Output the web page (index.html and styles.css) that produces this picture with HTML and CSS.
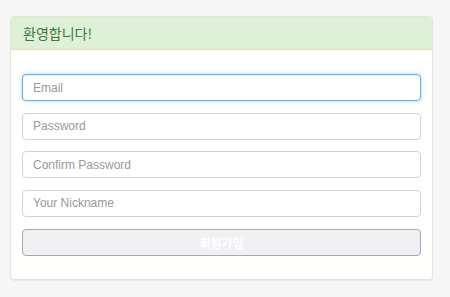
FILE: index.html
```html
<!DOCTYPE html>
<html lang="ko">
<head>
    <meta charset="UTF-8">
    <title>회원가입</title>
    <link rel="stylesheet" href="styles.css">
</head>
<body>

<div class="panel">
    <div class="panel-heading">
        <h3 class="panel-title">환영합니다!</h3>
    </div>
    <div class="panel-body">
        <form id="joinForm">
            <input type="email" class="form-control focus" placeholder="Email" autofocus>
            <input type="password" class="form-control" placeholder="Password">
            <input type="password" class="form-control" placeholder="Confirm Password">
            <input type="text" class="form-control" placeholder="Your Nickname">
            <button type="button" class="btn-join" disabled>회원가입</button>
        </form>
    </div>
</div>

</body>
</html>
```

FILE: styles.css
```css
body {
    margin: 0;
    padding: 16px 17px 19px 10px;
    background-color: #f6f6f6;
    font-family: "Liberation Sans", Arial, "Noto Sans CJK KR", sans-serif;
}
.panel {
    background-color: #fffffd;
    border: 1px solid #dfe8d6;
    border-radius: 4px;
    box-shadow: 0 1px 1px rgba(0, 0, 0, 0.05);
}
.panel-heading {
    background-color: #dff0d8;
    border-bottom: 1px solid #d6e4c8;
    border-radius: 3px 3px 0 0;
    padding: 0 12px;
    height: 32px;
    display: flex;
    align-items: center;
}
.panel-title {
    margin: 0;
    font-size: 14px;
    font-weight: normal;
    color: #3c763d;
    font-family: "Noto Sans CJK KR", sans-serif;
}
.panel-body {
    padding: 24px 11px 23px 11px;
}
form {
    display: flex;
    flex-direction: column;
    gap: 11.5px;
}
.form-control {
    box-sizing: border-box;
    height: 27px;
    margin: 0;
    padding: 0 10px;
    border: 1px solid #d2d2d2;
    border-radius: 4px;
    background-color: #fff;
    font-family: "Liberation Sans", Arial, sans-serif;
    font-size: 12px;
    color: #555;
    outline: none;
}
.form-control::placeholder {
    color: #999;
}
.form-control.focus {
    border-color: #66afe9;
    box-shadow: inset 0 1px 1px rgba(0, 0, 0, .075), 0 0 4px rgba(102, 175, 233, .5);
}
.btn-join {
    box-sizing: border-box;
    height: 27px;
    margin-top: 0.5px;
    border: 1px solid #98adb8;
    border-radius: 4px;
    background-color: #f1f1f3;
    color: #ffffff;
    font-family: "Noto Sans CJK KR", sans-serif;
    font-size: 12px;
    font-weight: bold;
}
```
